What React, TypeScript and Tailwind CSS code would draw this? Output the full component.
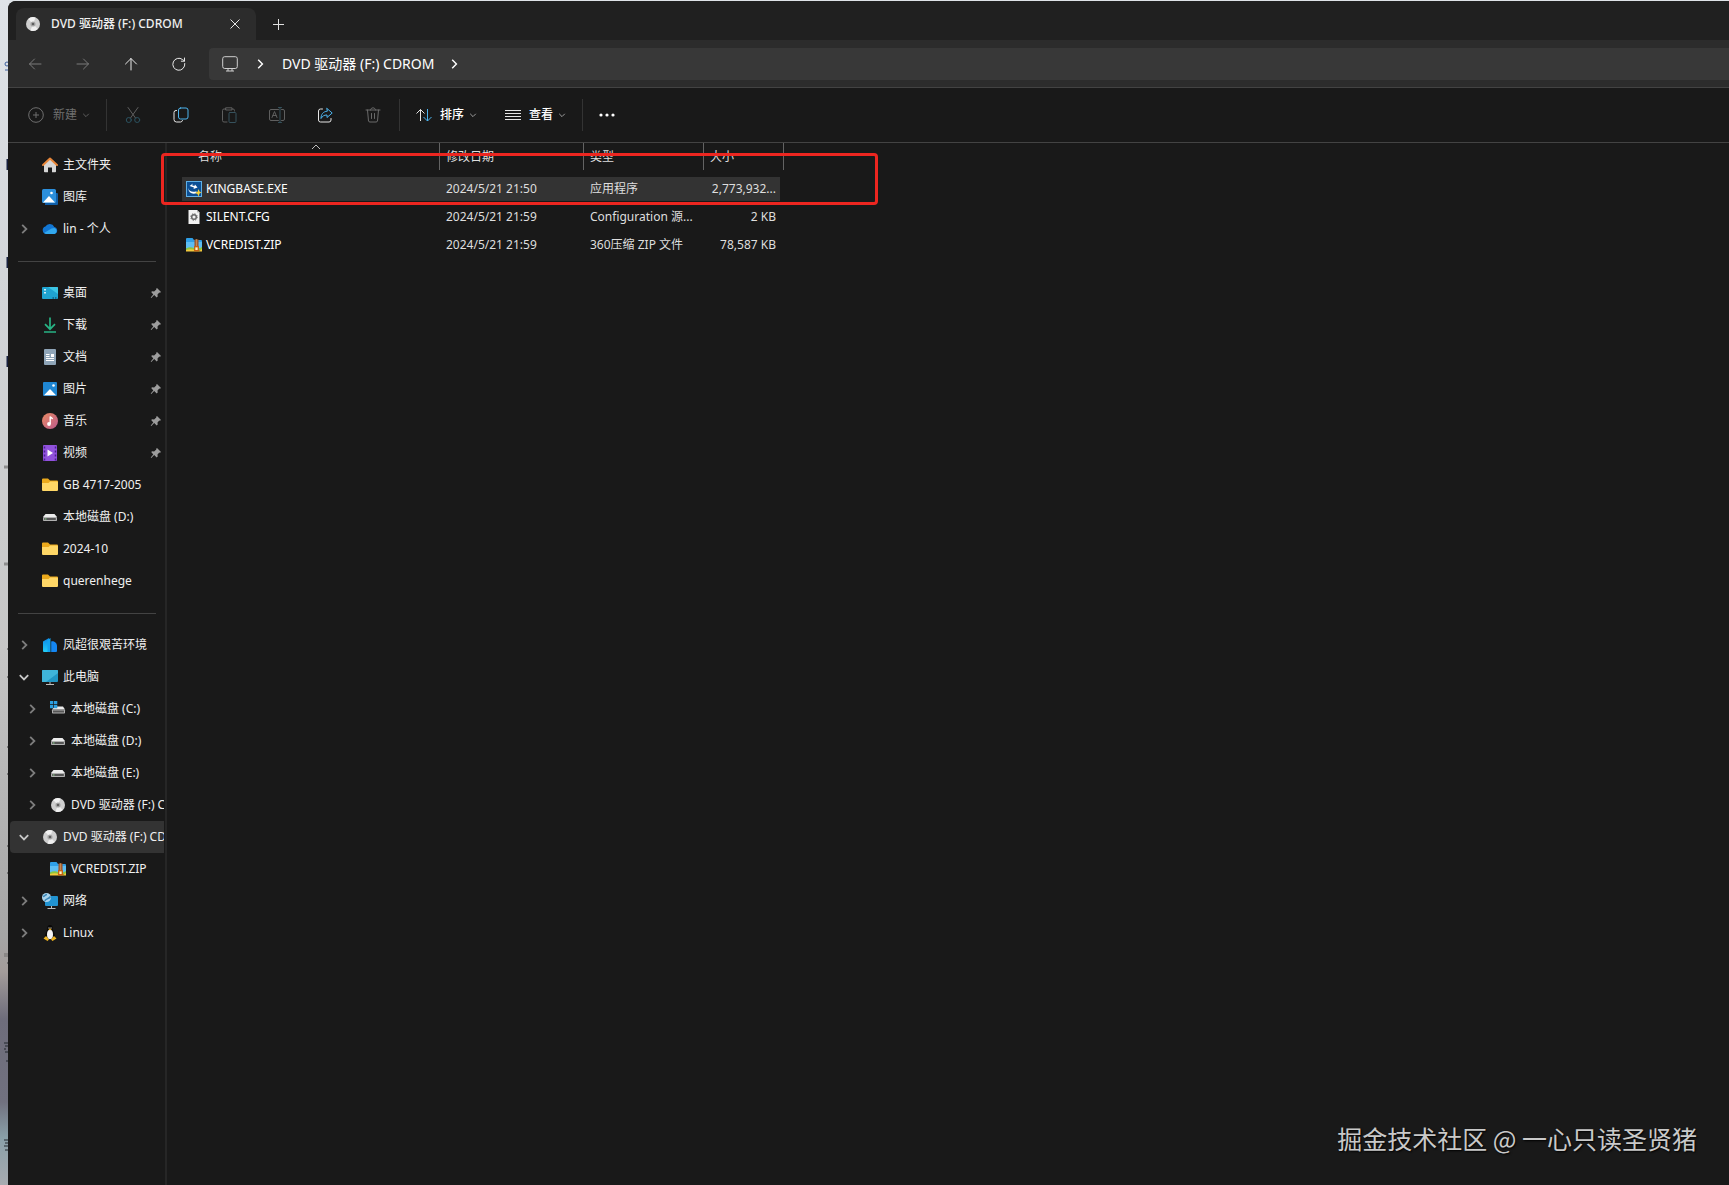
import React from 'react';

type IconProps = { className?: string };

const Chevron: React.FC<{ dir: 'right' | 'down' | 'up'; className?: string }> = ({ dir, className = '' }) => {
  const paths = {
    right: 'M3.5 1.5 7 5 3.5 8.5',
    down: 'M1.5 3.5 5 7 8.5 3.5',
    up: 'M1 7 5 3 9 7',
  };
  return (
    <svg viewBox="0 0 10 10" className={`shrink-0 ${className}`} fill="none" stroke="currentColor" aria-hidden="true">
      <path d={paths[dir]} />
    </svg>
  );
};

const Disc: React.FC<IconProps> = () => (
  <svg viewBox="0 0 16 16" className="size-4 shrink-0">
    <circle cx="8" cy="8" r="7" fill="#cfcfcf" />
    <path d="M8 8 3.2 2.9A7 7 0 0 1 10.5 1.5Z" fill="#f1f1f1" />
    <path d="M8 8 12.8 13.1A7 7 0 0 1 5.5 14.5Z" fill="#efefef" />
    <circle cx="8" cy="8" r="2.6" fill="#a9a9a9" />
    <circle cx="8" cy="8" r="1.3" fill="#5f5f5f" />
  </svg>
);

const Home: React.FC = () => (
  <svg viewBox="0 0 16 16" className="size-4 shrink-0">
    <path d="M2 7 8 2l6 5v7.5a.8.8 0 0 1-.8.8H10v-4.8H6v4.8H2.8a.8.8 0 0 1-.8-.8Z" fill="#d6d6d6" />
    <path d="M1 8 8 1.6 15 8" fill="none" stroke="#e8873a" strokeWidth="2" strokeLinecap="round" strokeLinejoin="round" />
  </svg>
);

const Gallery: React.FC = () => (
  <svg viewBox="0 0 16 16" className="size-4 shrink-0">
    <path d="M4 4h11a1 1 0 0 1 1 1v10a1 1 0 0 1-1 1H3Z" fill="#0f5ea8" />
    <rect width="14" height="14" rx="1.5" fill="#2b8fdc" />
    <path d="M1 13.5 7 7l6 6.5Z" fill="#fff" />
    <circle cx="9.5" cy="4" r="1.3" fill="#fff" />
  </svg>
);

const Cloud: React.FC = () => (
  <svg viewBox="0 0 16 16" className="size-4 shrink-0">
    <path d="M4 13a3.8 3.8 0 0 1-.6-7.4A5 5 0 0 1 12.3 6a3.6 3.6 0 0 1 .2 7Z" fill="#1276d3" />
    <path d="M2 12 9.5 7.5l3-.5a3.2 3.2 0 0 1 0 6H4Z" fill="#32a8ee" />
  </svg>
);

const Desktop: React.FC = () => (
  <svg viewBox="0 0 16 16" className="size-4 shrink-0">
    <rect y="2" width="16" height="12" rx="1" fill="#1fa3d0" />
    <path d="M6 2h9a1 1 0 0 1 1 1v6Z" fill="#3cc5e4" />
    <path d="M2.2 4.7h1.6M2.2 7.7h1.6" stroke="#fff" strokeWidth="1.5" />
    <path d="M10.5 13H12M13 13h1.5" stroke="#073b55" />
  </svg>
);

const Download: React.FC = () => (
  <svg viewBox="0 0 16 16" className="size-4 shrink-0" fill="none" stroke="#27b384" strokeWidth="1.7">
    <path d="M8 .5V12M3 7.2l5 5 5-5" />
    <path d="M2 15h12" />
  </svg>
);

const Doc: React.FC = () => (
  <svg viewBox="0 0 16 16" className="size-4 shrink-0">
    <rect x="2" width="12" height="16" rx="1" fill="#8fa5b8" />
    <path d="M4 5.5h3.5M4 7.5h3.5M4 9.5h8M4 11.5h8" stroke="#fff" />
    <rect x="9" y="5" width="3" height="3" fill="#fff" />
  </svg>
);

const Picture: React.FC = () => (
  <svg viewBox="0 0 16 16" className="size-4 shrink-0">
    <rect x="1" y="1" width="14" height="14" rx="1" fill="#1f86d2" />
    <path d="M2 14.2 8 8l6 6.2Z" fill="#fff" />
    <circle cx="11.5" cy="4.5" r="1.3" fill="#fff" />
  </svg>
);

const Music: React.FC = () => (
  <svg viewBox="0 0 16 16" className="size-4 shrink-0">
    <defs>
      <linearGradient id="music" x1="0" y1="0" x2="1" y2="1">
        <stop offset="0" stopColor="#e98a63" />
        <stop offset="1" stopColor="#bb5a8c" />
      </linearGradient>
    </defs>
    <circle cx="8" cy="8" r="8" fill="url(#music)" />
    <circle cx="7" cy="11" r="1.9" fill="#fff" />
    <path d="M8.2 11V3.5c.5 1.2 2 1.2 2.3 2.7" fill="none" stroke="#fff" strokeWidth="1.4" />
  </svg>
);

const Video: React.FC = () => (
  <svg viewBox="0 0 16 16" className="size-4 shrink-0">
    <rect x="1" width="14" height="16" rx="1" fill="#9152dc" />
    <path d="M2.5 1.5v14M13.5 1.5v14" stroke="#4b1f92" strokeWidth="1.5" strokeDasharray="2 2" />
    <path d="M5.5 4.5v7L11 8Z" fill="#fff" />
  </svg>
);

const Folder: React.FC = () => (
  <svg viewBox="0 0 16 16" className="size-4 shrink-0">
    <path d="M0 2.5a1 1 0 0 1 1-1h5l2 2h7a1 1 0 0 1 1 1V8H0Z" fill="#eba91c" />
    <path d="M0 6h6.5L8 4.5h7a1 1 0 0 1 1 1V13a1 1 0 0 1-1 1H1a1 1 0 0 1-1-1Z" fill="#ffd766" />
  </svg>
);

const Drive: React.FC = () => (
  <svg viewBox="0 0 16 16" className="size-4 shrink-0">
    <path d="M3.5 5h9L15 8H1Z" fill="#ececec" />
    <rect x="1" y="8" width="14" height="4" rx=".8" fill="#b0b0b0" />
    <rect x="2.2" y="9" width="11.6" height="2" fill="#555" />
    <path d="M3 10h1.5" stroke="#8bd88b" />
  </svg>
);

const SystemDrive: React.FC = () => (
  <svg viewBox="0 0 16 16" className="size-4 shrink-0">
    <path d="M5 5.5h8l2 3H2Z" fill="#ececec" />
    <rect x="2" y="8.500" width="13" height="4" rx=".8" fill="#b0b0b0" />
    <rect x="3" y="9.5" width="11" height="2" fill="#555" />
    <path d="M0 0h3.3v3.3H0zM4 0h3.3v3.3H4zM0 4h3.3v3.3H0zM4 4h3.3v3.3H4z" fill="#2c9fe0" />
  </svg>
);

const Buildings: React.FC = () => (
  <svg viewBox="0 0 16 16" className="size-4 shrink-0">
    <defs>
      <linearGradient id="buildings" x1="0" y1="0" x2="0" y2="1">
        <stop offset="0" stopColor="#0c86e6" />
        <stop offset="1" stopColor="#22cdf5" />
      </linearGradient>
    </defs>
    <path d="M1 4.5 7 1v14H2a1 1 0 0 1-1-1Z" fill="url(#buildings)" />
    <path d="M5.5 3 8.500 1v14h-3Z" fill="#12a2ee" />
    <path d="M9.2 4.500C12 3.500 15 6 15 9v5a1 1 0 0 1-1 1H9.200Z" fill="#1486f2" />
  </svg>
);

const Computer: React.FC = () => (
  <svg viewBox="0 0 16 16" className="size-4 shrink-0">
    <rect y="1" width="16" height="12" rx="1" fill="#2196c4" />
    <path d="M1 1h14a1 1 0 0 1 1 1v2L4 13H0V2a1 1 0 0 1 1-1Z" fill="#3fb5da" />
    <path d="M8 13v2M4 15.5h8" stroke="#bdbdbd" />
  </svg>
);

const Network: React.FC = () => (
  <svg viewBox="0 0 16 16" className="size-4 shrink-0">
    <rect x="3" y="3" width="13" height="10" rx="1" fill="#2193d1" />
    <path d="M9.5 13v2M5.5 15.5h8" stroke="#bdbdbd" />
    <circle cx="4.5" cy="4.5" r="4.5" fill="#a9d3ec" />
    <path d="M1 3.5c2 0 2-2 4-2M3 8c0-2 4-2 5.500-4.500" stroke="#3c87b8" fill="none" strokeWidth="1.5" />
  </svg>
);

const Tux: React.FC = () => (
  <svg viewBox="0 0 16 16" className="size-4 shrink-0">
    <path d="M8 0c2 0 2.800 1.500 2.700 4 .2 2.200 2.300 4 2.300 7.500C13 14 11 15 8 15s-5-1-5-3.500C3 8 5.200 6.200 5.300 4 5.200 1.500 6 0 8 0Z" fill="#080808" />
    <ellipse cx="8" cy="9.5" rx="3" ry="4.7" fill="#f4f4f4" />
    <path d="M6.500 2.500h1v1h-1zM8.500 2.500h1v1h-1z" fill="#fff" />
    <path d="M6.500 4 8 3.500 9.700 4 8 5.500Z" fill="#f2b01c" />
    <path d="M1.500 13.500 4 11l3 3.500-1.500 1.400ZM14.500 13.500 12 11l-3 3.500 1.500 1.400Z" fill="#eeb420" />
  </svg>
);

const Zip: React.FC = () => (
  <svg viewBox="0 0 16 16" className="size-4 shrink-0">
    <path d="M0 2a1 1 0 0 1 1-1h5.500L8 3h7a1 1 0 0 1 1 1v8H0Z" fill="#2f9fe6" />
    <path d="M0 5h16v6H0Z" fill="#5dbdf2" />
    <path d="M0 11.500q4-2 8-.5t8-1V13H0Z" fill="#8cc63f" />
    <path d="M0 13q5-1.500 9 0t7-1v2.500H0Z" fill="#f2ca3c" />
    <path d="M8.500 2.500h4V10h-4Z" fill="#9a4d24" />
    <path d="M10.500 2.500V10" stroke="#ecc27c" strokeDasharray="1 1" strokeWidth="1.5" />
    <rect x="8.700" y="9.700" width="3.600" height="4" fill="#fff3c4" stroke="#c85f10" strokeWidth="1.300" />
  </svg>
);

const Setup: React.FC = () => (
  <svg viewBox="0 0 16 16" className="size-4 shrink-0">
    <rect x=".5" y=".5" width="15" height="15" fill="#0c4f94" stroke="#5fb0e6" />
    <path d="M7 2.500 3.500 5 8 6.500l-.5 1.500 4-1.500L9 3.500l-.6 1.400L6 4.300Z" fill="#fff" />
    <path d="M2 7c1 3.500 4.500 4.500 8.500 3.200V12C6.500 14 2.500 11.500 2 7Z" fill="#fff" />
    <path d="m12.500 8 1 2.500 2 1-2 1-1 3-1-2.500-2.500-1 2.500-1.200Z" fill="#f4cf3a" />
  </svg>
);

const Config: React.FC = () => (
  <svg viewBox="0 0 16 16" className="size-4 shrink-0">
    <path d="M2.500 1H11l2.500 2.500V15h-11Z" fill="#f2f2f2" />
    <path d="M11 1v2.500h2.500Z" fill="#b9b9b9" />
    <circle cx="8" cy="8" r="2.300" fill="none" stroke="#6a6a6a" strokeWidth="1.500" />
    <circle cx="8" cy="8" r="3.300" fill="none" stroke="#6a6a6a" strokeDasharray="1.300 1.300" />
  </svg>
);

const Pin: React.FC = () => (
  <svg viewBox="0 0 12 12" className="mr-[2px] ml-auto size-3 shrink-0">
    <path d="M7 1l4 4-1 .7-.7-.1-1.800 2 .2 2-1 .9-2.500-2.400L1.300 11l-.6-.4 2.600-3.200L1.200 5l.9-.8 2 .2L6.300 2.500 6.200 1.700Z" fill="#9c9c9c" />
  </svg>
);

const Monitor: React.FC = () => (
  <svg viewBox="0 0 16 16" className="size-4 shrink-0" fill="none" stroke="#cfcfcf">
    <rect x=".7" y=".7" width="14.600" height="11.800" rx="2" />
    <path d="M6 12.500V15M10 12.500V15M4 15h8" />
  </svg>
);

// Sliver of the desktop that shows left of the window
const DesktopEdge: React.FC = () => (
  <svg className="absolute top-0 left-0 h-full w-2" fill="none" aria-hidden="true">
    <path d="M7.500 159v11M7.500 257v11M7.500 356v11" stroke="#17203f" strokeWidth="2" />
    <circle cx="7" cy="64" r="2" stroke="#3c5f9c" />
    <path d="M5 70h3" stroke="#3c5f9c" />
    <path d="M4 467h4M4 564h4" stroke="#8d8d8d" strokeWidth="3" />
    <path d="M7 649h1M7 677h1M7 747h1M7 774h1M7 846h1M7 873h1M7 963h1" stroke="#3a3a3a" />
    <path d="M4 955h4" stroke="#8a8786" strokeWidth="4" />
    <path d="M4 1043h4M5 1046h3M4 1049h2M5 1052h3M6 1061h2M4 1140h4M5 1143h3M4 1146h4M5 1150h3" stroke="#20272c" />
  </svg>
);

type Item = {
  label: string;
  icon: React.FC;
  arrow?: 'right' | 'down';
  nested?: boolean;
  pinned?: boolean;
  selected?: boolean;
};

const groups: Item[][] = [
  [
    { label: '主文件夹', icon: Home },
    { label: '图库', icon: Gallery },
    { label: 'lin - 个人', icon: Cloud, arrow: 'right' },
  ],
  [
    { label: '桌面', icon: Desktop, pinned: true },
    { label: '下载', icon: Download, pinned: true },
    { label: '文档', icon: Doc, pinned: true },
    { label: '图片', icon: Picture, pinned: true },
    { label: '音乐', icon: Music, pinned: true },
    { label: '视频', icon: Video, pinned: true },
    { label: 'GB 4717-2005', icon: Folder },
    { label: '本地磁盘 (D:)', icon: Drive },
    { label: '2024-10', icon: Folder },
    { label: 'querenhege', icon: Folder },
  ],
  [
    { label: '凤超很艰苦环境', icon: Buildings, arrow: 'right' },
    { label: '此电脑', icon: Computer, arrow: 'down' },
    { label: '本地磁盘 (C:)', icon: SystemDrive, arrow: 'right', nested: true },
    { label: '本地磁盘 (D:)', icon: Drive, arrow: 'right', nested: true },
    { label: '本地磁盘 (E:)', icon: Drive, arrow: 'right', nested: true },
    { label: 'DVD 驱动器 (F:) CDROM', icon: Disc, arrow: 'right', nested: true },
    { label: 'DVD 驱动器 (F:) CDROM', icon: Disc, arrow: 'down', selected: true },
    { label: 'VCREDIST.ZIP', icon: Zip, nested: true },
    { label: '网络', icon: Network, arrow: 'right' },
    { label: 'Linux', icon: Tux, arrow: 'right' },
  ],
];

const files = [
  { name: 'KINGBASE.EXE', date: '2024/5/21 21:50', type: '应用程序', size: '2,773,932...', icon: Setup, selected: true },
  { name: 'SILENT.CFG', date: '2024/5/21 21:59', type: 'Configuration 源...', size: '2 KB', icon: Config },
  { name: 'VCREDIST.ZIP', date: '2024/5/21 21:59', type: '360压缩 ZIP 文件', size: '78,587 KB', icon: Zip },
];

const SidebarItem: React.FC<{ item: Item }> = ({ item }) => {
  const Icon = item.icon;
  return (
    <li>
      <button
        className={`flex h-8 w-full items-center overflow-hidden rounded-l-sm text-left ${item.nested ? 'pl-[15px]' : 'pl-[7px]'} ${item.selected ? 'bg-[#333333]' : ''}`}
      >
        <span className="flex w-[25px] shrink-0 pl-px">
          {item.arrow && (
            <Chevron
              dir={item.arrow}
              className={`size-3 stroke-[1.5] ${item.arrow === 'down' ? 'text-[#c8c8c8]' : 'text-[#7d7d7d]'}`}
            />
          )}
        </span>
        <Icon />
        <span className="ml-[5px] whitespace-nowrap">{item.label}</span>
        {item.pinned && <Pin />}
      </button>
    </li>
  );
};

const ToolButton: React.FC<{ label: string; children: React.ReactNode }> = ({ label, children }) => (
  <button aria-label={label} className="flex size-8 items-center justify-center">
    <svg viewBox="0 0 16 16" className="size-4 overflow-visible" fill="none" strokeLinejoin="round" strokeLinecap="round">
      {children}
    </svg>
  </button>
);

const Divider: React.FC = () => <div className="h-8 w-px shrink-0 bg-[#333333]" />;

const TitleBar: React.FC = () => (
  <div className="flex h-[39px] items-end bg-[#202020] pl-2">
    <div className="flex h-8 w-60 items-center rounded-t-lg bg-[#2c2c2c] pr-[11px] pl-[9px]">
      <Disc />
      <span className="ml-[10px] font-medium">DVD 驱动器 (F:) CDROM</span>
      <button aria-label="关闭" className="ml-auto flex size-5 items-center justify-center">
        <svg viewBox="0 0 10 10" className="size-[10px]" stroke="#e6e6e6">
          <path d="M.5.5l9 9M9.5.5l-9 9" />
        </svg>
      </button>
    </div>
    <button aria-label="新标签页" className="ml-[6px] flex size-8 items-center justify-center">
      <svg viewBox="0 0 11 11" className="size-[11px]" stroke="#e0e0e0">
        <path d="M5.5 0v11M0 5.5h11" />
      </svg>
    </button>
  </div>
);

const NavBar: React.FC = () => (
  <nav className="flex h-12 items-center border-b border-[#434343] bg-[#2c2c2c] pl-[11px]">
    <div className="flex gap-4">
      <ToolButton label="后退">
        <path d="M14 8H2.5M7.5 3l-5 5 5 5" stroke="#7a7a7a" />
      </ToolButton>
      <ToolButton label="前进">
        <path d="M2 8h11.5M8.5 3l5 5-5 5" stroke="#7a7a7a" />
      </ToolButton>
      <ToolButton label="向上">
        <path d="M8 14V2.5M2.5 8 8 2.5 13.5 8" stroke="#e8e8e8" />
      </ToolButton>
      <ToolButton label="刷新">
        <path d="M13.8 7.500A6 6 0 1 1 11.500 3.500L13.500 5M13.500 2v3.200h-3.200" stroke="#e8e8e8" />
      </ToolButton>
    </div>
    <div className="ml-[14px] flex h-8 flex-1 items-center rounded-l bg-[#383838] pl-[13px] text-sm text-white">
      <Monitor />
      <Chevron dir="right" className="mr-4 ml-4 size-3 stroke-[1.2]" />
      <a href="#drive">DVD 驱动器 (F:) CDROM</a>
      <Chevron dir="right" className="ml-[14px] size-3 stroke-[1.2]" />
    </div>
  </nav>
);

const Toolbar: React.FC = () => (
  <div className="flex h-[55px] items-center border-b border-[#434343]">
    <button className="ml-5 flex w-[62px] items-center text-[#6f6f6f]">
      <svg viewBox="0 0 16 16" className="size-4" fill="none" stroke="currentColor">
        <circle cx="8" cy="8" r="7.3" />
        <path d="M8 5v6M5 8h6" />
      </svg>
      <span className="ml-[9px]">新建</span>
      <Chevron dir="down" className="ml-[5px] size-2" />
    </button>
    <div className="ml-4">
      <Divider />
    </div>
    <div className="mr-[10px] ml-[10px] flex gap-4">
      <ToolButton label="剪切">
        <path d="M3 .5 10.5 11M13 .5 5.5 11" stroke="#5f5f5f" />
        <circle cx="3.8" cy="13" r="2.5" stroke="#2b5260" />
        <circle cx="12.2" cy="13" r="2.5" stroke="#2b5260" />
      </ToolButton>
      <ToolButton label="复制">
        <path d="M3.500 3.500H3A2 2 0 0 0 1 5.500v7a2.500 2.500 0 0 0 2.500 2.500h4A2 2 0 0 0 9.500 13.500" stroke="#e6e6e6" />
        <rect x="5.5" y="1" width="9.5" height="11" rx="2" stroke="#4cb4ee" />
      </ToolButton>
      <ToolButton label="粘贴">
        <path d="M5 2H3a1.500 1.500 0 0 0-1.500 1.500v10A1.500 1.500 0 0 0 3 15h3M11 2h1a1.500 1.500 0 0 1 1.500 1.500V4M5 .8h6V3H5Z" stroke="#5f5f5f" />
        <rect x="8" y="5.5" width="7" height="10" rx="1" stroke="#36525d" />
      </ToolButton>
      <ToolButton label="重命名">
        <path d="M9.500 2.500H2A1.500 1.500 0 0 0 .5 4v8A1.500 1.500 0 0 0 2 13.500h7.500M12.500 2.500H14A1.500 1.500 0 0 1 15.500 4v8a1.500 1.500 0 0 1-1.500 1.500h-1.500M3 10.500l2.500-6 2.500 6M4 8.500h3" stroke="#5f5f5f" />
        <path d="M11 .5v15M9.5.5h3M9.5 15.5h3" stroke="#36525d" />
      </ToolButton>
      <ToolButton label="共享">
        <path d="M5.500 2H3.500A2 2 0 0 0 1.500 4v9a2 2 0 0 0 2 2H12a2 2 0 0 0 2-2v-1.500" stroke="#e6e6e6" />
        <path d="M10 1.500 15.200 6 10 10.500V8C7 8 5.500 9 4 11.500 4 7.500 6 4.500 10 4.200Z" stroke="#4cb4ee" />
      </ToolButton>
      <ToolButton label="删除">
        <path d="M1 3h14M5.500 3c0-3 5-3 5 0M2.500 3l1 11A1.500 1.500 0 0 0 5 15h6a1.500 1.500 0 0 0 1.500-1l1-11M6.500 6.500v5M9.500 6.500v5" stroke="#6a6a6a" />
      </ToolButton>
    </div>
    <Divider />
    <button className="ml-4 flex items-center text-white">
      <svg viewBox="0 0 16 16" className="size-4" fill="none">
        <path d="M4.500 14V2.500M.5 6.500l4-4 4 4" stroke="#e6e6e6" />
        <path d="M11.500 2v12M7.500 10l4 4 4-4" stroke="#4cb4ee" />
      </svg>
      <span className="ml-2 font-medium">排序</span>
      <Chevron dir="down" className="ml-[5px] size-2 text-[#bdbdbd]" />
    </button>
    <button className="ml-7 flex items-center text-white">
      <svg viewBox="0 0 16 16" className="size-4" stroke="#e6e6e6">
        <path d="M0 3.500h16M0 6.500h16M0 9.500h16M0 12.500h16" />
      </svg>
      <span className="ml-2 font-medium">查看</span>
      <Chevron dir="down" className="ml-[5px] size-2 text-[#bdbdbd]" />
    </button>
    <div className="ml-4">
      <Divider />
    </div>
    <button aria-label="更多" className="ml-4 flex">
      <svg viewBox="0 0 16 16" className="size-4" fill="#fff">
        <circle cx="2" cy="8" r="1.6" />
        <circle cx="8" cy="8" r="1.6" />
        <circle cx="14" cy="8" r="1.6" />
      </svg>
    </button>
  </div>
);

const FileTable: React.FC = () => (
  <table className="w-[602px] table-fixed border-separate border-spacing-0 text-left text-[#dedede]">
    <colgroup>
      <col className="w-[258px]" />
      <col className="w-36" />
      <col className="w-[120px]" />
      <col className="w-[76px]" />
      <col className="w-1" />
    </colgroup>
    <thead>
      <tr>
        {['名称', '修改日期', '类型', '大小'].map((title, i) => (
          <th key={title} colSpan={i === 3 ? 2 : 1} className="h-8 p-0 align-top font-normal">
            <div className={`flex h-[27px] items-center border-r border-[#636363] ${i === 0 ? 'pl-4' : 'pl-[6px]'}`}>
              {title}
            </div>
          </th>
        ))}
      </tr>
    </thead>
    <tbody>
      {files.map(({ icon: Icon, ...file }) => {
        const cell = `h-7 border-y-2 border-transparent bg-clip-padding whitespace-nowrap ${file.selected ? 'bg-[#333333]' : ''}`;
        return (
          <tr key={file.name}>
            <td className={`${cell} p-0 pl-1`}>
              <div className="flex items-center gap-1 text-white">
                <Icon />
                {file.name}
              </div>
            </td>
            <td className={`${cell} p-0 pl-[6px]`}>{file.date}</td>
            <td className={`${cell} p-0 pl-[6px]`}>{file.type}</td>
            <td className={`${cell} p-0 pr-1 text-right`}>{file.size}</td>
          </tr>
        );
      })}
    </tbody>
  </table>
);

const App: React.FC = () => {
  return (
    <div className="relative flex min-h-screen overflow-hidden bg-[linear-gradient(#dfe3e8_0%,#d2d5d8_25%,#c6c6c6_55%,#a5a5a5_79%,#a39c9a_82%,#6e6d7b_86%,#71717f_93%,#8aa0a8_96%,#a7abb0_100%)] pt-px pl-2 font-['Noto_Sans','Noto_Sans_CJK_SC',sans-serif] text-xs">
      <DesktopEdge />
      <div className="flex min-w-0 flex-1 flex-col overflow-hidden rounded-tl-lg bg-[#191919] text-[#f0f0f0]">
        <TitleBar />
        <NavBar />
        <Toolbar />
        <div className="flex flex-1">
          <aside className="w-[159px] shrink-0 border-r-2 border-[#262626] pt-[6px] pr-px pl-[2px]">
            {groups.map((items, i) => (
              <div key={i}>
                {i > 0 && (
                  <div className="flex h-8 items-center pr-2 pl-2">
                    <hr className="w-full border-[#434343]" />
                  </div>
                )}
                <ul>
                  {items.map((item, j) => (
                    <SidebarItem key={j} item={item} />
                  ))}
                </ul>
              </div>
            ))}
          </aside>
          <main className="relative flex-1 pl-[15px]">
            <Chevron dir="up" className="absolute -top-px left-[144px] size-[10px] text-[#bdbdbd]" />
            <FileTable />
            <div className="absolute top-[10px] left-[-6px] h-[52px] w-[717px] rounded-sm border-3 border-[#ec2620]" />
          </main>
        </div>
      </div>
      <p className="absolute right-8 bottom-[30px] font-['Noto_Sans_CJK_SC',sans-serif] text-[25px] text-[#c9c9c9] [text-shadow:1px_1px_2px_#000]">
        掘金技术社区 @ 一心只读圣贤猪
      </p>
    </div>
  );
};

export default App;
